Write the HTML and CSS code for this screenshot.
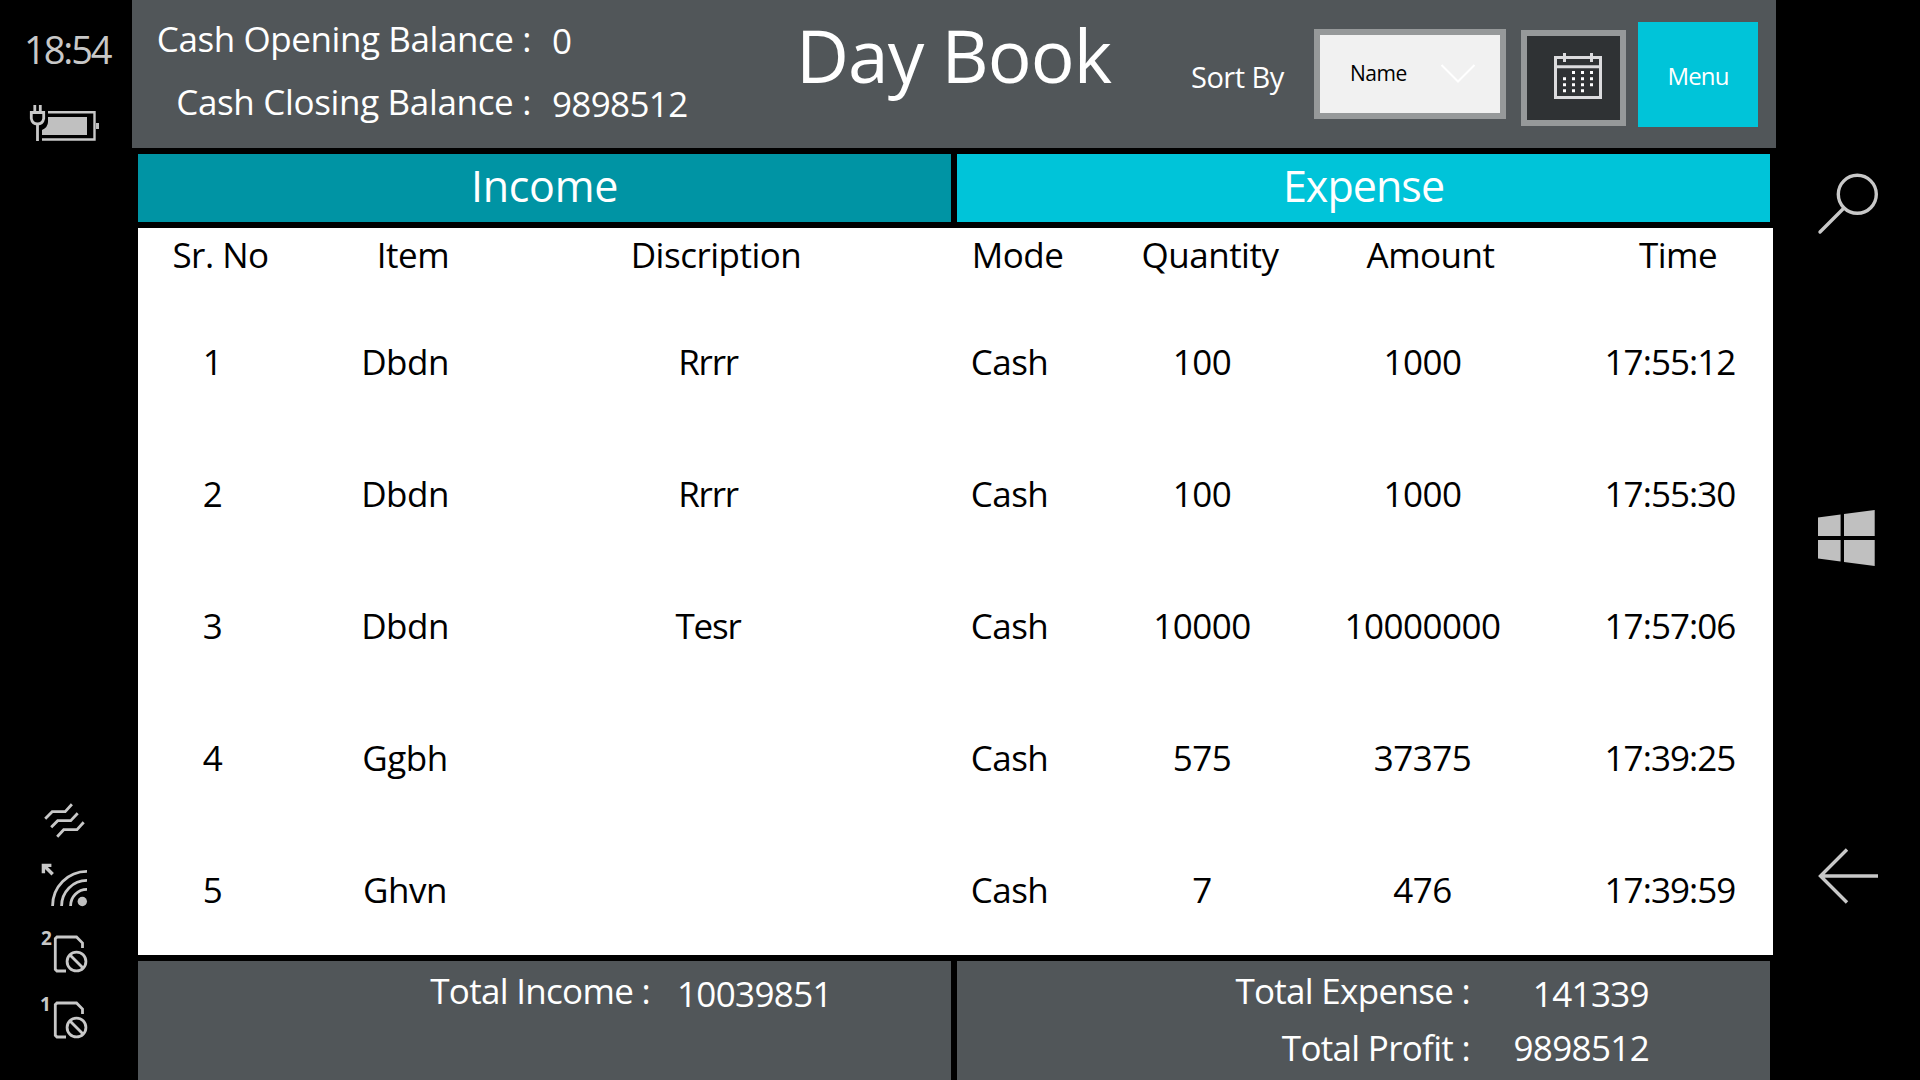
FILE: index.html
```html
<!DOCTYPE html><html lang="en"><head><meta charset="utf-8">
<title>Day Book</title>
<link rel="stylesheet" href="styles.css">
</head><body>

<aside class="status">
	<div class="clock">18:54</div>
	<svg class="battery" viewBox="24 100 84 46" width="84" height="46">
		<path class="line" d="M34.8 105v6M40.3 105v6M37.5 125v16"/>
		<path class="line" d="M31.3 112.5h12.4v6q-1 5.500-6.200 5.500t-6.200-5.500z"/>
		<path class="line thin" d="M48 112.3h46.5v27.2H42"/>
		<path class="fill" d="M96 123h3v6h-3zM48 117h39v18H42v-5q6-3 6-8z"/>
	</svg>
	<div class="signals">
		<svg viewBox="36 796 60 48" width="60" height="48">
			<path class="line" d="M45.2 818.7l7-7h13l6.7-7.4M51.2 827.3l6.5-6.6h13l7-7.4M57.2 836.7l6.5-7H77l6.7-7.4"/>
		</svg>
		<svg viewBox="36 858 60 54" width="60" height="54">
			<path class="line" d="M52.6 906A34.4 34.4 0 0 1 87 871.4M61.6 906A25.4 25.4 0 0 1 87 880.4M70.6 906A16.4 16.4 0 0 1 87 889.4"/>
			<circle class="fill" cx="82.3" cy="901.5" r="4.7"/>
			<path class="line bold" d="M52.7 874.2l-9-9M43.4 873.3v-7.900h8"/>
		</svg>
		<svg viewBox="36 920 60 56" width="60" height="56">
			<text class="sim" x="41" y="944.5">2</text>
			<path class="line" d="M82.5 948v-5l-6-6H57l-1.700 1.700v30.600L57 971h9"/>
			<circle class="line" cx="76.5" cy="961.5" r="9.4"/>
			<path class="line" d="M70 955l13 13"/>
		</svg>
		<svg viewBox="36 920 60 56" width="60" height="56">
			<text class="sim" x="40" y="944.5">1</text>
			<path class="line" d="M82.5 948v-5l-6-6H57l-1.700 1.700v30.600L57 971h9"/>
			<circle class="line" cx="76.5" cy="961.5" r="9.4"/>
			<path class="line" d="M70 955l13 13"/>
		</svg>
	</div>
</aside>

<main class="app">
	<header class="top">
		<div class="balances">
			<span class="label">Cash Opening Balance :</span><span class="value">0</span>
			<span class="label closing">Cash Closing Balance :</span><span class="value">9898512</span>
		</div>
		<h1>Day Book</h1>
		<span class="sortby">Sort By</span>
		<div class="select">
			<span>Name</span>
			<svg viewBox="0 0 36 20" width="36" height="20"><path d="M1.5 1L18 17.5 34.5 1"/></svg>
		</div>
		<div class="calendar">
			<svg viewBox="1552 52 52 50" width="52" height="50">
				<path d="M1555.5 57.5h45v40h-45zM1555.5 66.8h45M1564.5 53v9M1591.5 53v9"/>
				<path class="dots" d="M1572 72.5h21M1563 78.7h30M1563 84.7h30M1563 90.7h21"/>
			</svg>
		</div>
		<button class="menu">Menu</button>
	</header>

	<nav class="tabs">
		<div class="income">Income</div>
		<div class="expense">Expense</div>
	</nav>

	<section class="book">
		<div class="row head"><span>Sr. No</span><span>Item</span><span>Discription</span><span>Mode</span><span>Quantity</span><span>Amount</span><span>Time</span></div>
		<div class="row"><span>1</span><span>Dbdn</span><span class="desc">Rrrr</span><span>Cash</span><span>100</span><span>1000</span><span class="time">17:55:12</span></div>
		<div class="row"><span>2</span><span>Dbdn</span><span class="desc">Rrrr</span><span>Cash</span><span>100</span><span>1000</span><span class="time">17:55:30</span></div>
		<div class="row"><span>3</span><span>Dbdn</span><span class="desc">Tesr</span><span>Cash</span><span>10000</span><span>10000000</span><span class="time">17:57:06</span></div>
		<div class="row"><span>4</span><span>Ggbh</span><span class="desc"></span><span>Cash</span><span>575</span><span>37375</span><span class="time">17:39:25</span></div>
		<div class="row"><span>5</span><span>Ghvn</span><span class="desc"></span><span>Cash</span><span>7</span><span>476</span><span class="time">17:39:59</span></div>
	</section>

	<footer class="totals">
		<div class="total left">
			<span class="label">Total Income :</span><span class="value low">10039851</span>
		</div>
		<div class="total right">
			<span class="label">Total Expense :</span><span class="value low">141339</span>
			<span class="label">Total Profit :</span><span class="value">9898512</span>
		</div>
	</footer>
</main>

<nav class="keys">
	<svg viewBox="1812 168 72 70" width="72" height="70">
		<circle class="line" cx="1857.3" cy="194.3" r="19"/>
		<path class="line" d="M1843.5 208.5L1820 232" stroke-linecap="round"/>
	</svg>
	<svg viewBox="1812 504 72 70" width="72" height="70">
		<path class="fill" d="M1818 517.5l22.6-3V536H1818zM1844 514l30.7-4v26H1844zM1818 540h22.6v21.5l-22.6-3zM1844 540h30.7v26l-30.7-4z"/>
	</svg>
	<svg viewBox="1812 840 72 70" width="72" height="70">
		<path class="line" d="M1820 876h58M1847 849.5L1820.5 876l26.5 26.5"/>
	</svg>
</nav>

</body></html>
```
FILE: styles.css
```css
body {
	margin: 0;
	width: 1920px;
	height: 1080px;
	display: flex;
	overflow: hidden;
	background: #000;
	color: #fff;
	font-family: "Open Sans", "Noto Sans", sans-serif;
	font-size: 35px;
	letter-spacing: -.5px;
	white-space: nowrap;
}
svg {
	display: block;
}
.line {
	fill: none;
	stroke: #c8c8c8;
	stroke-width: 2.8;
}
.thin {
	stroke-width: 2.4;
}
.bold {
	stroke-width: 3.4;
}
.fill {
	fill: #c0c0c0;
}

/* phone status bar */
.status {
	width: 132px;
	height: 1080px;
	display: flex;
	flex-direction: column;
}
.clock {
	margin: 24px 0 0 24px;
	height: 76px;
	line-height: 51px;
	font-size: 38px;
	font-weight: 400;
	letter-spacing: -2.1px;
	color: #c8c8c8;
}
.battery {
	margin-left: 24px;
}
.signals {
	margin: 650px 0 0 36px;
	display: flex;
	flex-direction: column;
	gap: 14px;
}
.signals svg:nth-child(3) {
	margin-top: -6px;
}
.signals svg:last-child {
	margin-top: -4px;
}
.sim {
	fill: #c8c8c8;
	font-size: 19px;
	font-weight: 700;
}

.app {
	width: 1644px;
	height: 1080px;
}
.top {
	height: 148px;
	display: flex;
	align-items: flex-start;
	background: #515659;
}
.balances {
	width: 664px;
	padding-top: 8px;
	display: grid;
	grid-template-columns: 399px 1fr;
	grid-auto-rows: 63px;
	column-gap: 21px;
	line-height: 62px;
}
.balances .label {
	text-align: right;
	letter-spacing: -.42px;
}
.balances .closing {
	letter-spacing: -.34px;
}
.value {
	letter-spacing: -.65px;
}
.balances .value {
	padding-top: 2px;
}
h1 {
	margin: 5px 0 0;
	width: 395px;
	font-size: 73px;
	font-weight: 400;
	letter-spacing: -.9px;
	line-height: 100px;
}
.sortby {
	width: 123px;
	margin-top: 51px;
	font-size: 29px;
	line-height: 52px;
}
.select {
	box-sizing: border-box;
	width: 192px;
	height: 90px;
	margin-top: 29px;
	padding: 0 24px 0 30px;
	display: flex;
	align-items: center;
	justify-content: space-between;
	border: 6px solid #96999a;
	background: #f1f1f1;
	color: #000;
	font-size: 21px;
}
.select span {
	padding-bottom: 2px;
}
.select svg {
	fill: none;
	stroke: #fff;
	stroke-width: 2;
}
.calendar {
	box-sizing: border-box;
	width: 105px;
	height: 96px;
	margin: 30px 12px 0 15px;
	padding: 16px 0 0 25px;
	border: 6px solid #96999a;
	background: #2f3234;
}
.calendar svg {
	fill: none;
	stroke: #dcdcde;
	stroke-width: 3;
}
.calendar .dots {
	stroke: #fff;
	stroke-dasharray: 3 6;
}
.menu {
	width: 120px;
	height: 105px;
	margin: 22px 0 0;
	padding: 2px 0 0;
	border: none;
	background: #00c4d9;
	color: #fff;
	font: 24px "Open Sans", "Noto Sans", sans-serif;
	letter-spacing: -.9px;
}

.tabs {
	margin: 6px 6px;
	display: grid;
	grid-template-columns: 813px 813px;
	gap: 6px;
	text-align: center;
	font-size: 43px;
	line-height: 64px;
}
.tabs div {
	height: 68px;
}
.income {
	background: #0094a4;
	letter-spacing: -.3px;
}
.expense {
	background: #00c4d9;
	letter-spacing: -.95px;
}

.book {
	width: 1635px;
	height: 727px;
	margin-left: 6px;
	background: #fff;
	color: #000;
}
.row {
	display: grid;
	grid-template-columns: 149px 236px 370px 233px 152px 289px 206px;
	line-height: 134px;
	height: 132px;
	text-align: center;
}
.head {
	height: 67px;
	padding-left: 8px;
	line-height: 53px;
}
.desc {
	letter-spacing: -1.2px;
}
.time {
	letter-spacing: -.95px;
}

.totals {
	margin: 6px 6px 0;
	display: grid;
	grid-template-columns: 813px 813px;
	gap: 6px;
}
.total {
	height: 119px;
	display: grid;
	grid-auto-rows: 57px;
	line-height: 59px;
	background: #515659;
}
.left {
	grid-template-columns: 512px 1fr;
	column-gap: 27px;
}
.right {
	grid-template-columns: 513px 179px;
}
.total .label, .right .value {
	text-align: right;
}
.total .label {
	letter-spacing: -.7px;
}
.low {
	padding-top: 3px;
}

/* hardware keys */
.keys {
	width: 144px;
	padding: 168px 0 0 36px;
	box-sizing: border-box;
	display: flex;
	flex-direction: column;
	gap: 266px;
}
.keys .line {
	stroke-width: 3.4;
}
```
